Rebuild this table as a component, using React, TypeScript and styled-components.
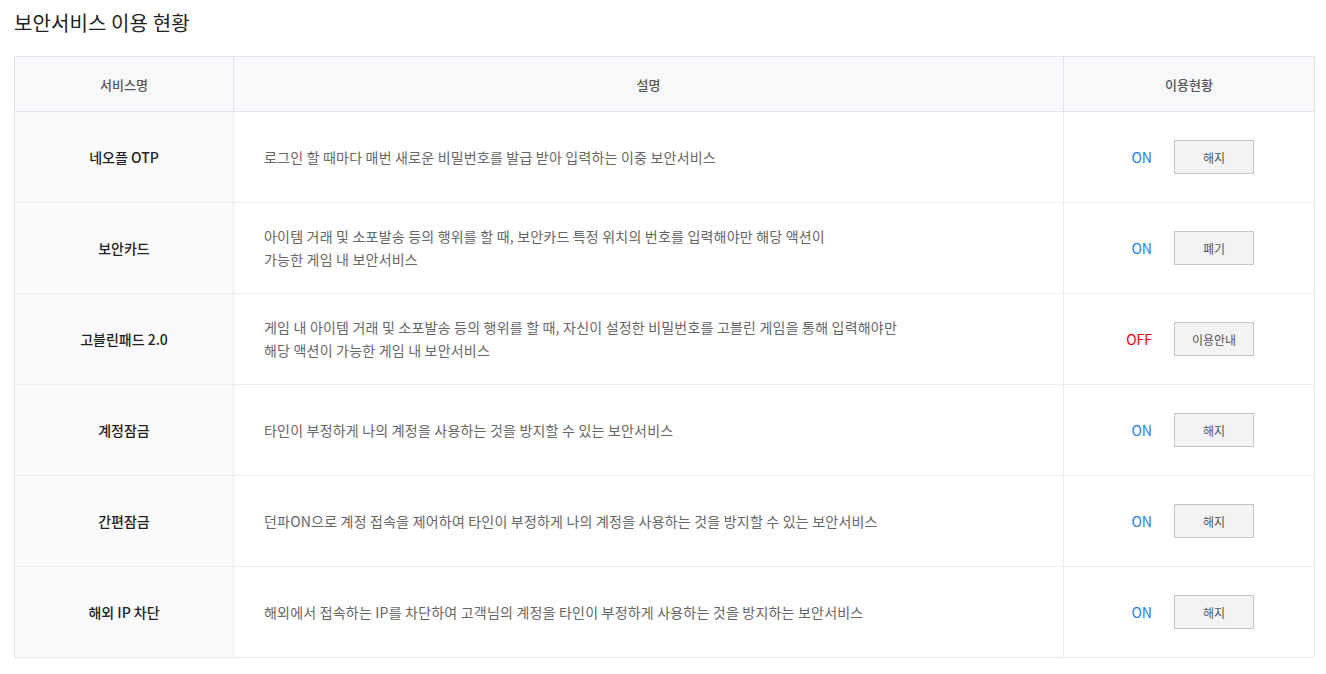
import React from "react";
import styled, { createGlobalStyle } from "styled-components";

const Global = createGlobalStyle`
  html, body { margin: 0; padding: 0; background: #fff; }
  body { font-family: "Noto Sans CJK KR", "Noto Sans", sans-serif; }
`;

const Page = styled.div`
  padding: 8px 13px 0 14px;
`;

const Title = styled.h2`
  margin: 0 0 14px 0;
  height: 34px;
  line-height: 30px;
  font-size: 20px;
  font-weight: 400;
  color: #222;
  letter-spacing: 0.1px;
`;

const Table = styled.table`
  width: 1300px;
  border-collapse: collapse;
  table-layout: fixed;
  border: 1px solid #e4e6ec;
`;

const HeadCell = styled.th`
  height: 54px;
  padding: 0;
  background: #f7f8fa;
  border: 1px solid #e1e3ea;
  font-size: 13px;
  font-weight: 500;
  color: #555;
  text-align: center;
`;

const Row = styled.tr`
  border-bottom: 1px solid #ececec;
`;

const NameCell = styled.td`
  height: 90px;
  padding: 0;
  background: #fafafc;
  border-right: 1px solid #ececec;
  text-align: center;
  font-size: 14px;
  font-weight: 500;
  color: #222;
`;

const DescCell = styled.td`
  padding: 0 30px;
  border-right: 1px solid #ececec;
  font-size: 14px;
  line-height: 23px;
  letter-spacing: 0.2px;
  color: #666;
`;

const StatusCell = styled.td`
  padding: 0;
`;

const StatusWrap = styled.div`
  display: flex;
  align-items: center;
  padding-left: 44px;
`;

const Status = styled.span<{ $on: boolean }>`
  width: 44px;
  text-align: right;
  font-size: 14px;
  font-weight: 400;
  color: ${(p) => (p.$on ? "#1a7ff2" : "#f00000")};
`;

const ActionButton = styled.button`
  margin-left: 22px;
  width: 80px;
  height: 34px;
  border: 1px solid #c3c5ce;
  background: #f3f3f3;
  font-family: inherit;
  font-size: 12px;
  color: #555;
  cursor: pointer;
  padding: 0;
`;

type Item = { name: string; desc: string[]; on: boolean; action: string };

const items: Item[] = [
  { name: "네오플 OTP", desc: ["로그인 할 때마다 매번 새로운 비밀번호를 발급 받아 입력하는 이중 보안서비스"], on: true, action: "해지" },
  {
    name: "보안카드",
    desc: ["아이템 거래 및 소포발송 등의 행위를 할 때, 보안카드 특정 위치의 번호를 입력해야만 해당 액션이", "가능한 게임 내 보안서비스"],
    on: true,
    action: "폐기",
  },
  {
    name: "고블린패드 2.0",
    desc: ["게임 내 아이템 거래 및 소포발송 등의 행위를 할 때, 자신이 설정한 비밀번호를 고블린 게임을 통해 입력해야만", "해당 액션이 가능한 게임 내 보안서비스"],
    on: false,
    action: "이용안내",
  },
  { name: "계정잠금", desc: ["타인이 부정하게 나의 계정을 사용하는 것을 방지할 수 있는 보안서비스"], on: true, action: "해지" },
  { name: "간편잠금", desc: ["던파ON으로 계정 접속을 제어하여 타인이 부정하게 나의 계정을 사용하는 것을 방지할 수 있는 보안서비스"], on: true, action: "해지" },
  { name: "해외 IP 차단", desc: ["해외에서 접속하는 IP를 차단하여 고객님의 계정을 타인이 부정하게 사용하는 것을 방지하는 보안서비스"], on: true, action: "해지" },
];

export default function App() {
  return (
    <Page>
      <Global />
      <Title>보안서비스 이용 현황</Title>
      <Table>
        <colgroup>
          <col style={{ width: 219 }} />
          <col style={{ width: 830 }} />
          <col style={{ width: 251 }} />
        </colgroup>
        <thead>
          <tr>
            <HeadCell>서비스명</HeadCell>
            <HeadCell>설명</HeadCell>
            <HeadCell>이용현황</HeadCell>
          </tr>
        </thead>
        <tbody>
          {items.map((it) => (
            <Row key={it.name}>
              <NameCell>{it.name}</NameCell>
              <DescCell>
                {it.desc.map((d, i) => (
                  <React.Fragment key={i}>
                    {i > 0 && <br />}
                    {d}
                  </React.Fragment>
                ))}
              </DescCell>
              <StatusCell>
                <StatusWrap>
                  <Status $on={it.on}>{it.on ? "ON" : "OFF"}</Status>
                  <ActionButton>{it.action}</ActionButton>
                </StatusWrap>
              </StatusCell>
            </Row>
          ))}
        </tbody>
      </Table>
    </Page>
  );
}
